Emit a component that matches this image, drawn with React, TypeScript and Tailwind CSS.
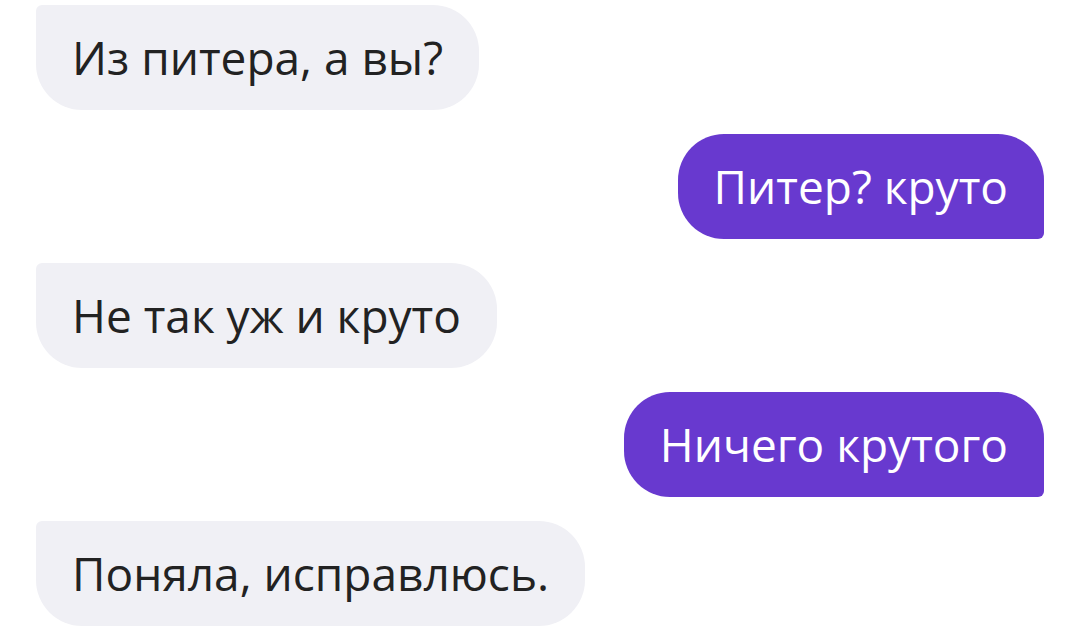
import React from "react";

interface Message {
  text: string;
  mine: boolean;
}

const messages: Message[] = [
  { text: "Из питера, а вы?", mine: false },
  { text: "Питер? круто", mine: true },
  { text: "Не так уж и круто", mine: false },
  { text: "Ничего крутого", mine: true },
  { text: "Поняла, исправлюсь.", mine: false },
];

export default function App() {
  return (
    <div className="w-[1080px] h-[632px] bg-white overflow-hidden pt-[5px] pl-[36px] pr-[36px] flex flex-col gap-[24px] font-['Open_Sans',sans-serif]">
      {messages.map((m, i) => (
        <div key={i} className={m.mine ? "flex justify-end" : "flex justify-start"}>
          <div
            className={
              m.mine
                ? "h-[105px] flex items-center px-[36px] bg-[#6839cf] text-white rounded-[46px] rounded-br-[6px] text-[46px]"
                : "h-[105px] flex items-center px-[36px] bg-[#f0f0f5] text-[#222222] rounded-[46px] rounded-tl-[6px] text-[46px]"
            }
          >
            {m.text}
          </div>
        </div>
      ))}
    </div>
  );
}
